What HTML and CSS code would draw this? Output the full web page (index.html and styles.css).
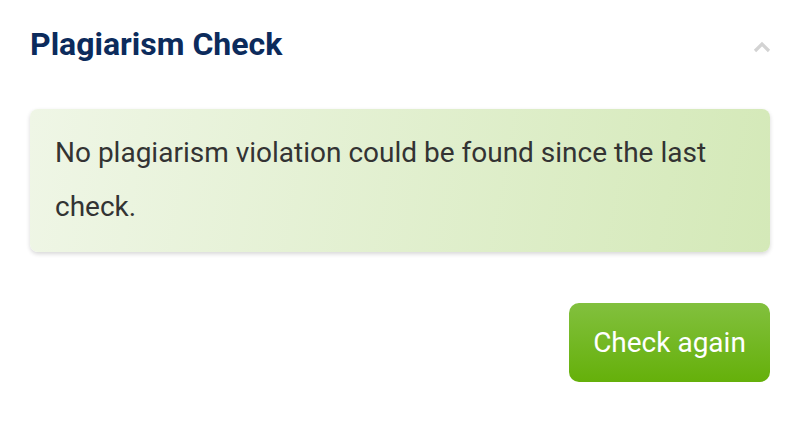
FILE: index.html
```html
<!DOCTYPE html>
<html>
<head>
<meta charset="utf-8">
<link rel="stylesheet" href="styles.css">
</head>
<body>
<div class="panel">
  <div class="panel-header">
    <h2 class="title">Plagiarism Check</h2>
    <svg class="chevron" width="18" height="12" viewBox="0 0 18 12"><path d="M2 10 L9 3 L16 10" fill="none" stroke="#d3d3d3" stroke-width="3.2"/></svg>
  </div>
  <div class="result">No plagiarism violation could be found since the last check.</div>
  <div class="actions">
    <button class="btn">Check again</button>
  </div>
</div>
</body>
</html>
```
FILE: styles.css
```css
html, body { margin: 0; padding: 0; background: #fff; }
body { font-family: Roboto, "Noto Sans", sans-serif; }
.panel { padding: 22px 30px 30px 30px; }
.panel-header { display: flex; align-items: center; justify-content: space-between; height: 44px; }
.title { margin: 0; font-size: 32px; font-weight: 700; color: #0c2b5c; }
.chevron { margin-right: -1px; margin-top: 6px; }
.result {
  margin-top: 43px;
  padding: 17px 24px 18px 25px;
  border-radius: 8px;
  background: linear-gradient(100deg, #eff6e6 0%, #d4e9b8 100%);
  box-shadow: 0 2px 4px rgba(0,0,0,0.16);
  font-size: 28px;
  line-height: 54px;
  color: #333;
}
.actions { display: flex; justify-content: flex-end; margin-top: 51px; }
.btn {
  font-family: Roboto, sans-serif;
  font-size: 28px;
  color: #fff;
  border: none;
  border-radius: 10px;
  background: linear-gradient(180deg, #82c03e 0%, #65b00a 100%);
  width: 201px;
  height: 79px;
  padding: 0;
}
```
